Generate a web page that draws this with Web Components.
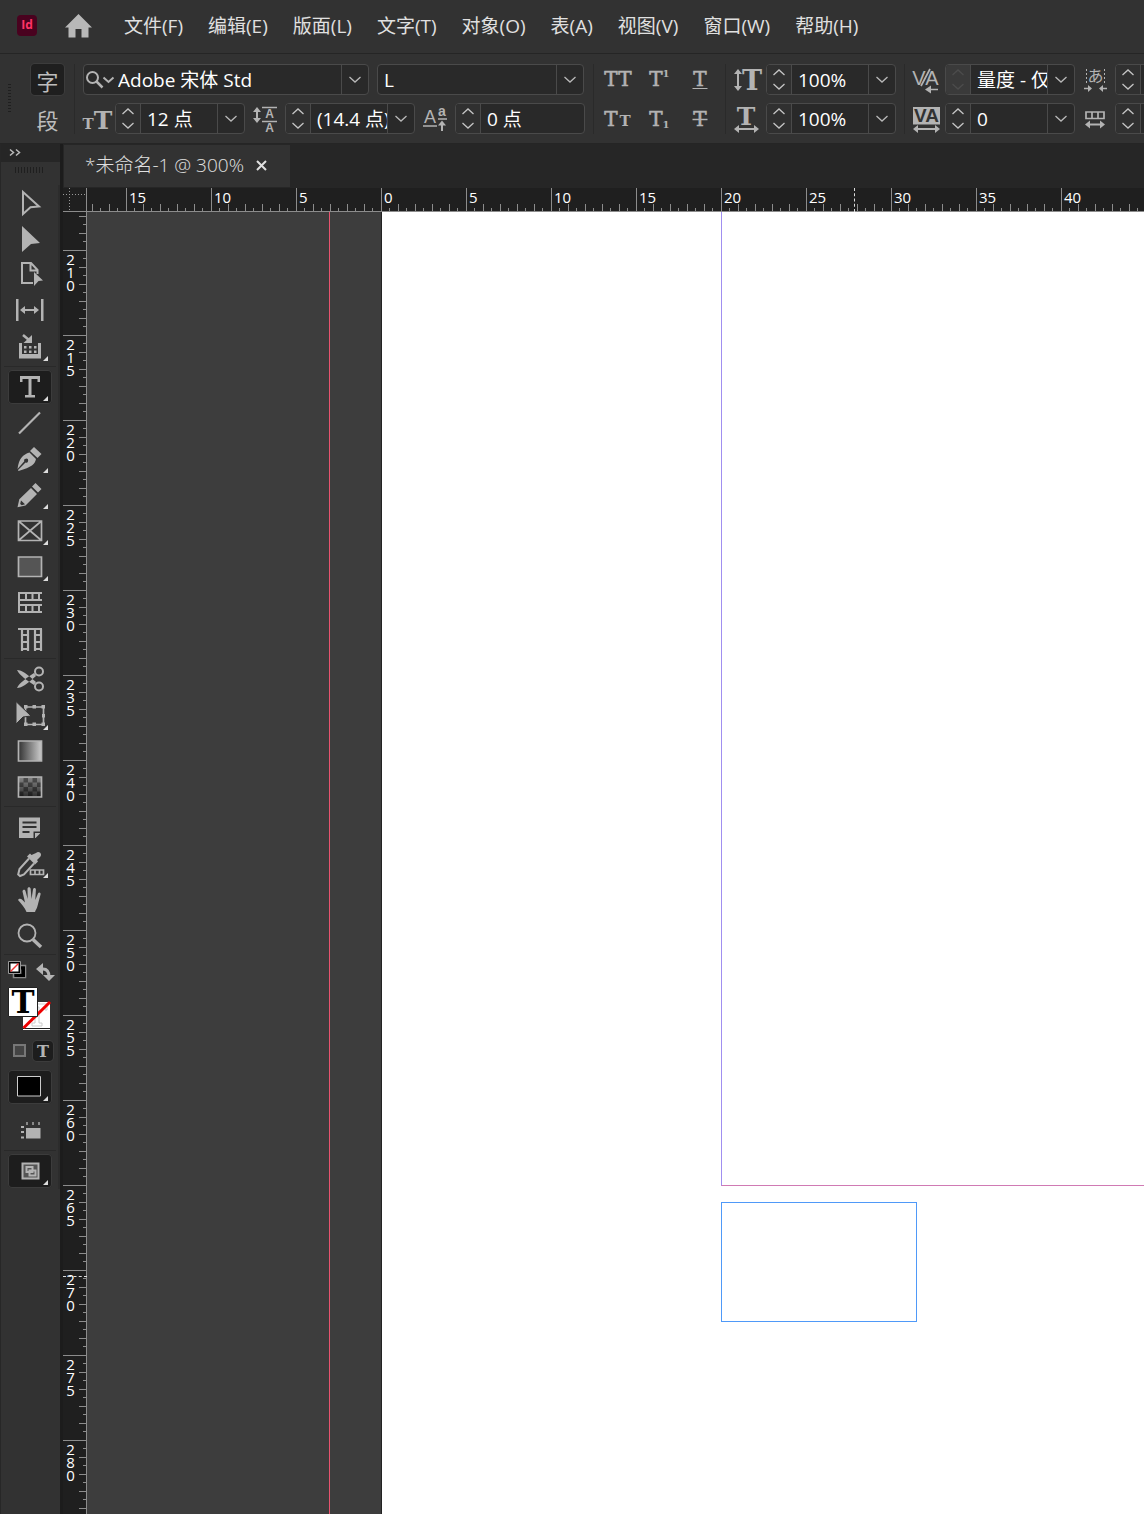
<!DOCTYPE html>
<html lang="zh-CN">
<head>
<meta charset="utf-8">
<title>未命名-1</title>
<style>
html,body{margin:0;height:100%;overflow:hidden;background:#323232}
body{font:19px/24px "Open Sans","Noto Sans CJK SC",sans-serif;color:#e0e0e0}
</style>
</head>
<body>
<layout-app></layout-app>
<script>
const G = '#b3b3b3';
const serif = 'font-family="DejaVu Serif"';
const sans = 'font-family="Liberation Sans"';
// a serif letter T centred on x
const T = (x, y, s, w = 'normal', f = G) => `<text x="${x}" y="${y}" font-size="${s}" font-weight="${w}" fill="${f}" ${w === 'normal' ? `stroke="${f}" stroke-width=".6"` : ''} text-anchor="middle" ${serif}>T</text>`;
// double-headed horizontal arrow
const hArrow = (a, b, y) => `<path d="M${a + 3} ${y}H${b - 3}" stroke="${G}" stroke-width="2"/><path d="M${a} ${y}l5-4v8zM${b} ${y}l-5-4v8z" fill="${G}"/>`;
const vArrow = (x, a, b) => `<path d="M${x} ${a + 3}V${b - 3}" stroke="${G}" stroke-width="2"/><path d="M${x} ${a}l-4 5h8zM${x} ${b}l-4-5h8z" fill="${G}"/>`;
const corner = (y = 32) => `<path d="M40 ${y - 5}v5h-5z" fill="#ddd"/>`;

// tool icons share a 44 x 36 box
const tools = {
  select: `<path d="M15 7L31 21.5l-8.500 .7L15 29z" fill="none" stroke="${G}" stroke-width="2"/>`,
  direct: `<path d="M14 5L32 22l-9 1-9 8z" fill="${G}"/>`,
  page: `<path d="M25 26H14V6h9l6.500 7v4M22.500 6v7.500h7" fill="none" stroke="${G}" stroke-width="2"/><path d="M26 15l9 8.500-4.500.5-4.500 5z" fill="${G}"/>`,
  gap: `<path d="M8 6h2.500v22H8zM33 6h2.500v22H33z" fill="${G}"/>${hArrow(12, 31, 17)}`,
  collector: `<path d="M11 14h3v11h16V14h3v15.500H11z" fill="${G}"/><path d="M16 17h2.500v2.500H16zM21 17h2.500v2.500H21zM26 17h2.500v2.500H26zM16 21.500h2.500V24H16zM21 21.500h2.500V24H21zM26 21.500h2.500V24H26z" fill="${G}"/><path d="M15 6l6 5" stroke="${G}" stroke-width="2.500"/><path d="M24 6v8h-8.500z" fill="${G}"/>${corner()}`,
  type: `<path d="M12 7h20v6h-2.500v-3H23.500v16H27v2.500H17V26h3.500V10h-6v3H12z" fill="${G}"/>${corner()}`,
  line: `<path d="M11 28.500L32 7.500" stroke="${G}" stroke-width="2.200"/>`,
  pen: `<path d="M26 6l7.500 7-4 4-7.500-7z" fill="${G}"/><path d="M21.500 11.500l6.500 6.500c-1 5-4 8-17.500 12l-.5-1 7.500-7.500a2 2 0 1 0-1.200-1.200L9.500 28C11 17 15 13.500 21.500 11.500z" fill="${G}"/>${corner()}`,
  pencil: `<path d="M27.500 6l6 6-3.500 3.500-6-6zM23 11l6 6-11.500 11.500-8 1.800 1.800-8zM13 23.500l-.8 3.500 1.600 1.300 3.200-1z" fill="${G}" fill-rule="evenodd"/>${corner()}`,
  frame: `<path d="M10.500 8h23v19.500h-23zL33.500 27.500M33.500 8L10.500 27.500" fill="none" stroke="${G}" stroke-width="1.700"/>${corner()}`,
  rect: `<path d="M10.500 8h23v19.500h-23z" fill="#555" stroke="${G}" stroke-width="1.700"/>${corner()}`,
  hgrid: `<path d="M11 7v21M10 8h24M10 15h24M10 20h24M10 27h24M18 8v7M24.500 8v7M31 8v7M18 20v7M24.500 20v7M31 20v7" fill="none" stroke="${G}" stroke-width="2"/>`,
  vgrid: `<path d="M10 8h24M14 8v22M20 8v22M27 8v22M33 8v22M14 14h6M14 21h6M14 28h6M27 14h6M27 21h6M27 28h6" fill="none" stroke="${G}" stroke-width="2.200"/>`,
  cut: `<circle cx="31" cy="10.500" r="4" fill="none" stroke="${G}" stroke-width="2"/><circle cx="31" cy="25.500" r="4" fill="none" stroke="${G}" stroke-width="2"/><path d="M9 9c5 0 10 4 19 12l-2 3C19 19 12 15 9 9zM9 27c5 0 10-4 19-12l-2-3C19 17 12 21 9 27z" fill="${G}"/>`,
  transform: `<path d="M17.500 10h18v17.500h-18z" fill="none" stroke="${G}" stroke-width="1.700"/><path d="M33.500 8H37v3.500h-3.500zM24.500 8H28v3.500h-3.500zM16 8h3.500v3.500H16zM33.500 25.500H37V29h-3.500zM24.500 25.500H28V29h-3.500zM16 25.500h3.500V29H16zM34 17h3v3.500h-3z" fill="${G}"/><path d="M8 4.500L23 19l-8 1-7 7z" fill="${G}" stroke="#323232"/>${corner(33)}`,
  gradient: `<defs><linearGradient id="g"><stop stop-color="#333"/><stop offset="1" stop-color="#ccc"/></linearGradient></defs><path d="M10.500 8h23v20h-23z" fill="url(#g)" stroke="${G}" stroke-width="1.700"/>`,
  feather: `<defs><linearGradient id="f" x1="0" y1="0" x2="0" y2="1"><stop stop-color="#888"/><stop offset="1" stop-color="#2c2c2c"/></linearGradient></defs><path d="M10.500 8h23v20h-23z" fill="url(#f)" stroke="${G}" stroke-width="1.700"/><path d="M15.500 9H20v4.500h-4.500zM24.500 9H29v4.500h-4.500zM11.500 13.500h4V18h-4zM20 13.500h4.500V18H20zM29 13.500h3.500V18H29zM15.500 18H20v4.500h-4.500zM24.500 18H29v4.500h-4.500zM11.500 22.500h4V27h-4zM20 22.500h4.500V27H20zM29 22.500h3.500V27H29z" fill="#000" opacity=".4"/>`,
  note: `<path d="M11 8.500h21v14H25.500V29H11zM32 24v.5L27.500 29H27v-5z" fill="${G}"/><path d="M14.500 13.500h14M14.500 18h14M14.500 23h7" stroke="#323232" stroke-width="2"/>`,
  dropper: `<path d="M28 8c3-3 7 1 4 4l-3 3 1 1.500-3 3-8-8 3-3 1.500 1.500z" fill="${G}"/><path d="M21 13.500L11.500 24l-1.300 5.500L12 31l4-1.500L26 18.500" fill="none" stroke="${G}" stroke-width="2"/><path d="M22.500 25h13v4.500h-13zM27 25v5M31.500 25v5" fill="#323232" stroke="${G}" stroke-width="1.700"/>${corner(33)}`,
  hand: `<path d="M18.500 31c-1.500-4-5-8-8.500-12 1-2 3-1.500 4.500 0l2.500 2.500-2.500-11c0-2 2.500-2.500 3-.5l2.200 8L19.500 8c0-2.500 3-2.500 3.200 0l.8 10 1.500-9.500c.3-2.200 3-2 2.900.3L27.300 19l2.700-6.500c.8-1.800 3-1 2.600.8L29.500 25c-.5 2.500-2 4-2.500 6z" fill="${G}"/>`,
  zoom: `<circle cx="19" cy="16" r="8.500" fill="none" stroke="${G}" stroke-width="1.800"/><path d="M25 22.500l8 7.500" stroke="${G}" stroke-width="3.500"/>`,
  fill: `<path d="M9.500 7.500h23V27h-23z" fill="#000" stroke="#ccc"/>${corner()}`,
  view: `<path d="M18 15h14.500v10.500H18z" fill="${G}"/><path d="M13 14h3M13 19h3M13 24.500h3" stroke="${G}" stroke-width="2"/><path d="M19 9v3M25 9v3M31 9v3" stroke="#888" stroke-width="2"/>`,
  screen: `<path d="M14.500 10.500h16v15h-16z" fill="#555" stroke="${G}" stroke-width="2"/><path d="M18.500 14h6v5h-6zM21.500 17.500h6v5h-6z" fill="none" stroke="${G}" stroke-width="2"/>${corner()}`
};

// control bar icons share a 24 x 31 box
const glyphs = {
  size: T(5, 26, 15, 'bold') + T(20, 26, 25, 'bold'),
  leading: vArrow(4, 4, 20) + `<path d="M9 4.500h15M9 18.500h15" stroke="${G}" stroke-width="1.700"/><text x="16.500" y="15" font-size="12" font-weight="bold" fill="${G}" text-anchor="middle" ${sans}>A</text><text x="16.500" y="29" font-size="12" font-weight="bold" fill="${G}" text-anchor="middle" ${sans}>A</text>`,
  shift: `<text x="7" y="20" font-size="18" fill="${G}" text-anchor="middle" ${sans}>A</text><path d="M0 23h14M15 16h9" stroke="${G}" stroke-width="1.700"/><text x="19" y="13" font-size="14" font-weight="bold" fill="${G}" text-anchor="middle" ${sans}>a</text><path d="M19 20v8" stroke="${G}" stroke-width="2"/><path d="M19 17.500l-4 5h8z" fill="${G}"/>`,
  vscale: vArrow(4, 5, 27) + T(18, 26, 27, 'bold'),
  hscale: T(12, 22, 25, 'bold') + hArrow(0, 25, 26),
  kern: `<text x="6" y="21" font-size="20" fill="${G}" text-anchor="middle" ${sans}>V</text><text x="19" y="21" font-size="20" fill="${G}" text-anchor="middle" ${sans}>A</text><path d="M8 22L17 5M17 25.500h8" stroke="${G}" stroke-width="1.700"/><path d="M12 25.500l6-4v8z" fill="${G}"/>`,
  track: `<path d="M0 4h27v17.500H0z" fill="${G}"/><text x="13.500" y="19" font-size="19" font-weight="bold" fill="#323232" text-anchor="middle" ${sans}>VA</text>` + hArrow(0, 27, 26),
  aki: `<path d="M3.500 5v16M21.500 5v16" stroke="${G}" stroke-dasharray="2 2"/><text x="12.500" y="18" font-size="16" fill="${G}" text-anchor="middle" font-family="Noto Sans CJK SC">あ</text><path d="M1 24.500h5M19 24.500h5" stroke="${G}" stroke-width="1.500"/><path d="M9 24.500l-4-3.500v7zM16 24.500l4-3.500v7z" fill="${G}"/>`,
  grid: `<path d="M3 9h18v6.500H3zM9 9v7M15 9v7" fill="none" stroke="${G}" stroke-width="1.700"/>` + hArrow(2, 22, 21.500)
};

const define = (name, css, html) => {
  customElements.define(name, class extends HTMLElement {
    connectedCallback() {
      if (this.shadowRoot) return;
      const root = this.attachShadow({ mode: 'open' });
      root.innerHTML = `<style>*{box-sizing:border-box}button{appearance:none;border:0;margin:0;padding:0;background:none;color:inherit;font:inherit}svg{display:block;overflow:visible}${css}</style>${typeof html === 'function' ? html(this) : html}`;
    }
  });
};
const chevron = '<svg width="12" height="7" fill="none" stroke="#b8b8b8" stroke-width="1.300"><path d="M0.500 1l5.500 5 5.500-5"/></svg>';
const chevUp = '<svg width="12" height="7" fill="none" stroke="currentColor" stroke-width="1.300"><path d="M0.500 6l5.500-5 5.500 5"/></svg>';
const chevDn = '<svg width="12" height="7" fill="none" stroke="currentColor" stroke-width="1.300"><path d="M0.500 1l5.500 5 5.500-5"/></svg>';

define('menu-item', ':host{display:block}button{color:#e0e0e0;white-space:nowrap}', '<button type="button"><slot></slot></button>');

define('menu-bar', `
:host{display:block;background:#323232;border-bottom:1px solid #252525}
nav{display:flex;align-items:center;height:53px;padding:0 0 2px 17px}
.logo{width:20px;height:21px;border-radius:4px;background:#49021f;color:#ff3366;font:bold 12px/19px "Open Sans",sans-serif;text-align:center;margin-right:28px}
.home{margin-right:32px}
.items{display:flex;gap:25px}`,
`<nav><div class="logo">Id</div>
<button class="home" aria-label="主页"><svg width="27" height="24"><path d="M13.500 0L27 13.500H23.500V23.500H16.500V15H10.500V23.500H3.500V13.500H0z" fill="#b8b8b8"/></svg></button>
<div class="items">${['文件(F)', '编辑(E)', '版面(L)', '文字(T)', '对象(O)', '表(A)', '视图(V)', '窗口(W)', '帮助(H)'].map(t => `<menu-item>${t}</menu-item>`).join('')}</div></nav>`);

// text field with optional stepper, search mark and drop-down button
define('value-field', `
:host{display:flex;height:31px;width:130px;flex:none;border:1px solid #4a4a4a;border-radius:4px;background:#292929;overflow:hidden}
:host([wide]){width:286px}:host([mid]){width:207px}
.step{display:flex;flex-direction:column;align-items:center;width:25px;flex:none;background:#303030;border-right:1px solid #4a4a4a;color:#c4c4c4;padding:1px 1px 1px 0}
.step button{flex:1;display:flex;align-items:center}
:host([off]) .step{background:#3a3a3a;color:#4c4c4c}
.find{display:flex;align-items:center;padding-left:1px;flex:none}
input{flex:1;min-width:0;border:0;outline:0;background:none;color:#fff;font:inherit;padding:0 0 0 6px}
.find+input{padding-left:4px}
.drop{width:27px;flex:none;display:flex;align-items:center;justify-content:center;border-left:1px solid #4a4a4a}`,
el => (el.hasAttribute('step') ? `<div class="step"><button aria-label="增加">${chevUp}</button><button aria-label="减少">${chevDn}</button></div>` : '') +
  (el.hasAttribute('find') ? `<div class="find"><svg width="29" height="22" fill="none" stroke="${G}" stroke-width="2"><circle cx="7.500" cy="8.500" r="5.500"/><path d="M11.500 12.500l6 6" stroke-width="2.500"/><path d="M18.500 8.500l5 4.500 5-4.500"/></svg></div>` : '') +
  `<input type="text" aria-label="${el.getAttribute('label')}" value="${el.getAttribute('value') || ''}">` +
  (el.hasAttribute('drop') ? `<button class="drop" aria-label="展开">${chevron}</button>` : ''));

define('bar-glyph', ':host{display:block;width:24px;height:31px;flex:none}', el => `<svg width="24" height="31" aria-hidden="true">${glyphs[el.getAttribute('name')]}</svg>`);

const sub = y => `<text x="27" y="${y}" font-size="10" font-weight="bold" fill="${G}" ${serif} text-anchor="middle">1</text>`;
const caps = {
  '全部大写': T(13, 22, 20) + T(27, 22, 20), '上标': T(17, 22, 20) + sub(13),
  '下划线': T(20, 22, 20) + `<path d="M12.500 24.500h15" stroke="${G}"/>`,
  '小型大写': T(13, 23, 20) + T(27, 23, 15, 'bold'), '下标': T(17, 23, 20) + sub(25),
  '删除线': T(20, 23, 20) + `<path d="M12.500 16.500h15" stroke="${G}" stroke-width="1.500"/>`
};

define('control-bar', `
:host{display:block;background:#323232;border-bottom:1px solid #252525;overflow:hidden}
.bar{display:flex;gap:8px;padding:10px 0 9px 8px;width:max-content;align-items:stretch}
.grip{width:3px;height:30px;align-self:center;background:repeating-linear-gradient(#1f1f1f 0 1px,transparent 1px 3px);margin-right:12px}
.sep{width:1px;background:#2a2a2a}
.col{display:flex;flex-direction:column;gap:8px}
.row{display:flex;gap:8px}
.mode{width:34px;padding-right:1px}
.mode button{height:31px;font:22px/28px "Noto Sans CJK SC",sans-serif;color:#bdbdbd}
.mode button:first-child{background:#1f1f1f;border-radius:4px;box-shadow:0 0 0 1px #3c3c3c}
.mode+.sep{margin-left:1px}
.caps{display:grid;grid-template-columns:repeat(3,41px);gap:8px 0;margin:0 -4px}`,
`<div class="bar"><div class="grip"></div>
<div class="col mode"><button>字</button><button>段</button></div><div class="sep"></div>
<div class="col"><div class="row"><value-field wide find drop label="字体" value="Adobe 宋体 Std"></value-field><value-field mid drop label="字体样式" value="L"></value-field></div>
<div class="row"><bar-glyph name="size"></bar-glyph><value-field step drop label="字体大小" value="12 点"></value-field><bar-glyph name="leading"></bar-glyph><value-field step drop label="行距" value="(14.4 点)"></value-field><bar-glyph name="shift"></bar-glyph><value-field step label="基线偏移" value="0 点"></value-field></div></div>
<div class="sep"></div>
<div class="caps">${Object.entries(caps).map(([n, s]) => `<button aria-label="${n}"><svg width="41" height="31">${s}</svg></button>`).join('')}</div>
<div class="sep"></div>
<div class="col"><div class="row"><bar-glyph name="vscale"></bar-glyph><value-field step drop label="垂直缩放" value="100%"></value-field></div><div class="row"><bar-glyph name="hscale"></bar-glyph><value-field step drop label="水平缩放" value="100%"></value-field></div></div>
<div class="sep"></div>
<div class="col"><div class="row"><bar-glyph name="kern"></bar-glyph><value-field step off drop label="字偶间距" value="量度 - 仅"></value-field><bar-glyph name="aki"></bar-glyph><value-field step label="比例间距"></value-field></div><div class="row"><bar-glyph name="track"></bar-glyph><value-field step drop label="字符间距" value="0"></value-field><bar-glyph name="grid"></bar-glyph><value-field step label="网格指定格数"></value-field></div></div>
</div>`);

define('tool-button', `
:host{display:flex;align-items:center;height:36px}
button{width:44px;height:34px;border-radius:4px}
:host([active]) button{background:#1d1d1d;box-shadow:inset 0 0 0 1px #3c3c3c}
svg{margin-top:-1px}`,
el => `<button aria-label="${el.getAttribute('name')}"><svg width="44" height="36">${tools[el.getAttribute('name')]}</svg></button>`);

const group = (...n) => n.map(x => `<tool-button name="${x}"${x === 'type' ? ' active' : ''}></tool-button>`).join('') + '<hr>';
define('tool-panel', `
:host{display:block;width:63px;flex:none;background:#323232;border-left:1px solid #272727;border-right:3px solid #1c1c1c;overflow:hidden}
.head{height:18px;background:#262626;padding:5px 0 0 8px}
.grip{width:29px;height:6px;margin:5px 0 12px 14px;background:repeating-linear-gradient(90deg,#1f1f1f 0 1px,transparent 1px 3px)}
.list{display:flex;flex-direction:column;padding-left:7px;border-right:2px solid #2c2c2c}
hr{border:0;height:1px;width:52px;margin:1px 0 2px -4px;background:#292929}
.small{display:flex;align-items:center;height:28px}
.swatch{height:51px}
.pair{display:flex;align-items:center;gap:4px;height:30px;margin:0 0 3px 1px}
.pair button{width:20px;height:20px;border-radius:4px}
.pair .on{background:#1d1d1d;box-shadow:0 0 0 1px #3c3c3c}
.mid{margin:8px 0 0}`,
`<div class="head"><svg width="12" height="8" fill="none" stroke="#bbb" stroke-width="1.500"><path d="M1 0.500l3.500 3L1 6.500M7 0.500l3.500 3L7 6.500"/></svg></div><div class="grip"></div>
<div class="list">${group('select', 'direct', 'page', 'gap', 'collector')}${group('type', 'line', 'pen', 'pencil', 'frame', 'rect', 'hgrid', 'vgrid')}${group('cut', 'transform', 'gradient', 'feather')}${group('note', 'dropper', 'hand', 'zoom')}
<div class="small"><button aria-label="默认填色和描边"><svg width="44" height="28"><path d="M5.500 8.500h12v12h-12z" fill="none" stroke="#888" stroke-width="1.500"/><path d="M8 11h7.500v7.500H8z" fill="none" stroke="#000" stroke-width="3"/><path d="M.5 4.500h12v12H.5z" fill="#000" stroke="#999"/><path d="M2.500 6.500h8v8h-8z" fill="#fff"/><path d="M2.500 14.500l8-8" stroke="#e33" stroke-width="1.500"/><path d="M32 12h3q6 0 6 8" fill="none" stroke="${G}" stroke-width="3"/><path d="M28 12l7-6v12zM41 24l-6-6h12z" fill="${G}"/></svg></button></div>
<div class="swatch"><svg width="44" height="48"><path d="M15 17h27v28H15z" fill="#fff"/><path d="M24 38h3V22h4v16h3v3H24zM27 22v-3h12v6h-2v-3" fill="none" stroke="#ccc"/><path d="M15 43.500h27" stroke="#222"/><path d="M15.500 43L42 17" stroke="#e00" stroke-width="3"/><path d="M.5 2.500h29v29h-29z" fill="#fff" stroke="#222"/>${T(15, 28, 31, 'bold', '#000')}</svg></div>
<div class="pair"><button aria-label="格式针对容器"><svg width="20" height="20"><path d="M5 4h11v11H5z" fill="#444" stroke="#777" stroke-width="2"/></svg></button><button class="on" aria-label="格式针对文本"><svg width="20" height="20">${T(10, 16, 16, 'bold')}</svg></button></div>
<tool-button name="fill" active></tool-button>
<tool-button class="mid" name="view"></tool-button><hr>
<tool-button name="screen" active></tool-button></div>`);

define('doc-tabs', `
:host{display:block;background:#262626;height:44px;padding:1px}
.tab{display:flex;align-items:center;justify-content:space-between;width:226px;height:42px;background:#323232;padding:0 23px 2px 21px;font-weight:300;white-space:nowrap}`,
`<div class="tab"><span>*未命名-1 @ 300%</span><button aria-label="关闭"><svg width="11" height="11" stroke="#e0e0e0" stroke-width="2"><path d="M1 1l9 9M10 1l-9 9"/></svg></button></div>`);

// ruler made of 85px cells, one per five millimetres
define('px-ruler', `
:host{display:flex;background:#1f1f1f;overflow:hidden;font-size:15px;line-height:18px;color:#fff;min-width:0;min-height:0;position:relative}
.cell{flex:none;width:85px;height:24px;position:relative}
.cell:first-of-type{margin-left:-46px}
.cell svg{position:absolute;inset:0}
span{display:block;padding:0 0 0 3px}
:host([vertical]){flex-direction:column}
:host([vertical]) .cell{width:24px;height:85px}
:host([vertical]) .cell:first-of-type{margin:-47px 0 0}
:host([vertical]) span{width:9px;padding:3px 0 0;margin-left:3px;line-height:13px;text-align:center;word-break:break-all}
.mark{position:absolute;left:767px;top:0;height:24px;border-left:1px dashed #ddd}
:host([vertical]) .mark{left:0;top:1064px;height:0;width:24px;border:0;border-top:1px dashed #ddd}`,
el => {
  const v = el.hasAttribute('vertical');
  let d = v ? 'M0 .5H24M23.500 0V85' : 'M.5 0V24M0 23.500H85';
  for (const [p, l] of [[8, 4], [17, 8], [25, 4], [34, 8], [42, 4], [51, 8], [59, 4], [68, 8], [76, 4]]) d += v ? `M${24 - l} ${p + .5}H24` : `M${p + .5} ${24 - l}V24`;
  return el.getAttribute('labels').split(',').map(t => `<div class="cell"><svg width="${v ? 24 : 85}" height="${v ? 85 : 24}" stroke="#8c8c8c"><path d="${d}"/></svg><span>${t}</span></div>`).join('') + '<i class="mark"></i>';
});

define('doc-canvas', `
:host{display:flex;min-width:0;min-height:0;background:#3d3d3d;overflow:hidden}
.board{width:295px;flex:none;display:flex;justify-content:flex-end;border-right:1px solid #222}
.bleed{width:52px;border-left:1px solid #e8536e}
.page{flex:1;background:#fff;position:relative}
.margin{position:absolute;left:339px;top:0;right:0;height:974px;border-left:1px solid #a08ff0;border-bottom:1px solid #d07ab4}
.frame{position:absolute;left:339px;top:990px;width:196px;height:120px;border:1px solid #4f99f8}`,
'<div class="board"><div class="bleed"></div></div><div class="page"><div class="margin"></div><div class="frame"></div></div>');

define('layout-app', `
:host{display:flex;flex-direction:column;height:100vh}
main{flex:1;display:flex;min-height:0}
.doc{flex:1;min-width:0;display:flex;flex-direction:column}
.work{flex:1;min-height:0;display:grid;grid-template:24px minmax(0,1fr)/24px minmax(0,1fr)}
.origin{background:#1f1f1f;border-right:1px solid #8c8c8c;border-bottom:1px solid #8c8c8c}`,
`<menu-bar></menu-bar><control-bar></control-bar>
<main><tool-panel></tool-panel><div class="doc"><doc-tabs></doc-tabs><div class="work">
<div class="origin"><svg width="23" height="23" stroke="#999" stroke-dasharray="1 2"><path d="M6.500 0V23M0 6.500H23"/></svg></div>
<px-ruler labels=",15,10,5,0,5,10,15,20,25,30,35,40"></px-ruler>
<px-ruler vertical labels=",210,215,220,225,230,235,240,245,250,255,260,265,270,275,280"></px-ruler>
<doc-canvas></doc-canvas></div></div></main>`);
</script>
</body>
</html>
